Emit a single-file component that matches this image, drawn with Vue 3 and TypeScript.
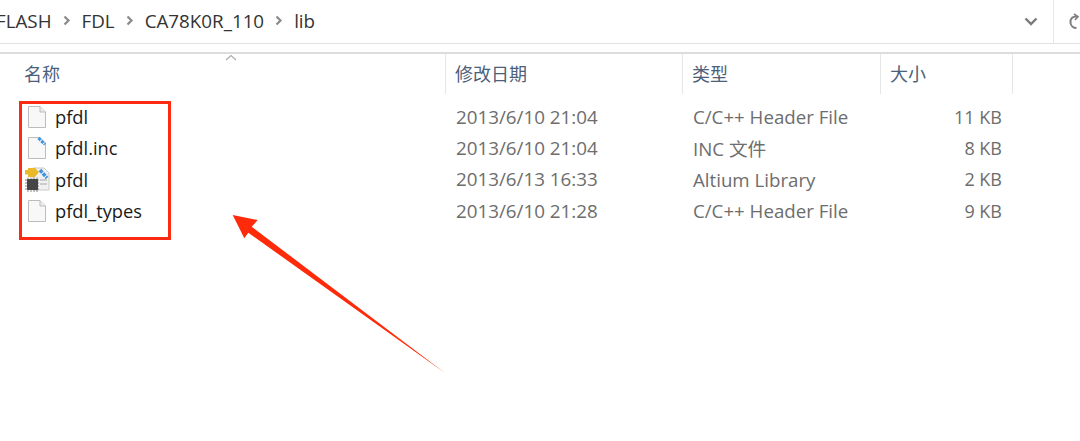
<template>
  <div class="explorer">
    <div class="address-bar">
      <nav class="crumbs">
        <template v-for="(part, i) in crumbs" :key="part">
          <span class="crumb">{{ part }}</span>
          <svg v-if="i < crumbs.length - 1" class="sep" width="8" height="11" viewBox="0 0 8 11">
            <path d="M1.500 1.500 5.500 5.500 1.500 9.500" fill="none" stroke="#8a8a8a" stroke-width="2.200" />
          </svg>
        </template>
      </nav>
      <div class="bar-tools">
        <svg class="dropdown" width="14" height="9" viewBox="0 0 14 9">
          <path d="M1.500 1.500 7 7 12.500 1.500" fill="none" stroke="#7a7a7a" stroke-width="2.400" />
        </svg>
        <div class="refresh">
          <svg width="12" height="18" viewBox="0 0 12 18">
            <path d="M9 3.500C4.500 3 2 6 2.500 10c.4 3 3 5 6 5" fill="none" stroke="#7f7f7f" stroke-width="2" />
            <path d="M6 1 10 3.600 7 7" fill="none" stroke="#7f7f7f" stroke-width="1.600" />
          </svg>
        </div>
      </div>
    </div>

    <div class="list">
      <div class="head">
        <div v-for="col in columns" :key="col" class="head-cell">{{ col }}</div>
        <svg class="sort" width="12" height="7" viewBox="0 0 12 7">
          <path d="M1 6 6 1.500 11 6" fill="none" stroke="#a9a9a9" stroke-width="1.100" />
        </svg>
      </div>

      <div class="rows">
        <div v-for="file in files" :key="file.name + file.date" class="row">
          <div class="name">
            <span class="icon">
              <svg v-if="file.icon === 'plain'" width="18" height="22" viewBox="0 0 18 22">
                <path d="M.5.500H12L17.500 6V21.500H.5Z" fill="#f8f8f8" stroke="#bcbcbc" />
                <path d="M12 .5V6H17.500" fill="#ececec" stroke="#bcbcbc" />
              </svg>
              <svg v-else-if="file.icon === 'inc'" width="18" height="22" viewBox="0 0 18 22">
                <path d="M.5.500H12L17.500 6V21.500H.5Z" fill="#f8f8f8" stroke="#bcbcbc" />
                <path d="M10.500 1 17 7.500" stroke="#3f94de" stroke-width="3" stroke-dasharray="3 1" />
              </svg>
              <svg v-else class="lib-icon" width="25" height="25" viewBox="0 0 25 25">
                <path d="M8 1H19L24 6V23H8Z" fill="#f1f1f1" stroke="#c8c8c8" />
                <path d="M15 13H22M15 17H22" stroke="#cbcbcb" stroke-width="2" />
                <path d="M15 3 22 11" stroke="#3f94de" stroke-width="3.500" stroke-dasharray="3.500 1" />
                <path d="M0 3H3V1H10L14 5 10 10H3V7.500H0Z" fill="#eab92c" />
                <path d="M0 13H14M0 16H14M0 19H14M0 22H14M3 10.500V25M6 10.500V25M9 10.500V25M12 10.500V25" stroke="#777" stroke-width=".9" />
                <rect x="2" y="12" width="11" height="11" rx="1" fill="#464646" />
              </svg>
            </span>
            <span class="file-name">{{ file.name }}</span>
          </div>
          <div class="cell date">{{ file.date }}</div>
          <div class="cell type">{{ file.type }}</div>
          <div class="cell size">{{ file.size }}</div>
        </div>
      </div>
    </div>

    <div class="highlight"></div>
    <svg class="arrow" width="1080" height="441" viewBox="0 0 1080 441">
      <path d="M445 373 248.300 232.700 244.300 238.300 232.700 215 257.700 220 251.700 226.700Z" fill="#ff2a0a" />
    </svg>
  </div>
</template>

<script setup lang="ts">
interface FileRow {
  name: string
  date: string
  type: string
  size: string
  icon: 'plain' | 'inc' | 'lib'
}

const crumbs = ['FLASH', 'FDL', 'CA78K0R_110', 'lib']
const columns = ['名称', '修改日期', '类型', '大小']

const files: FileRow[] = [
  { name: 'pfdl', date: '2013/6/10 21:04', type: 'C/C++ Header File', size: '11 KB', icon: 'plain' },
  { name: 'pfdl.inc', date: '2013/6/10 21:04', type: 'INC 文件', size: '8 KB', icon: 'inc' },
  { name: 'pfdl', date: '2013/6/13 16:33', type: 'Altium Library', size: '2 KB', icon: 'lib' },
  { name: 'pfdl_types', date: '2013/6/10 21:28', type: 'C/C++ Header File', size: '9 KB', icon: 'plain' }
]
</script>

<style>
html,
body {
  margin: 0;
  background: #fff;
}
</style>

<style scoped>
.explorer {
  position: relative;
  width: 1080px;
  height: 441px;
  overflow: hidden;
  background: #fff;
  font-family: "Open Sans", "Noto Sans CJK SC", sans-serif;
  font-size: 18px;
}

.address-bar {
  display: flex;
  justify-content: space-between;
  height: 43px;
  border-bottom: 1px solid #e2e2e2;
}

.crumbs {
  display: flex;
  align-items: center;
  gap: 11px;
  height: 41px;
  margin-left: -4px;
  color: #333;
  font-size: 18.8px;
}

.bar-tools {
  display: flex;
  align-items: center;
}

.dropdown {
  margin-right: 15px;
}

.refresh {
  display: flex;
  align-items: center;
  height: 43px;
  padding-left: 14px;
  border-left: 1px solid #e8e8e8;
}

.list {
  margin-top: 8px;
  border-top: 2px solid #dcdcdc;
}

.head {
  position: relative;
  display: grid;
  grid-template-columns: 446px 237px 198px 132px;
  height: 40px;
}

.head-cell {
  display: flex;
  align-items: center;
  box-sizing: border-box;
  padding-left: 9px;
  padding-bottom: 3px;
  color: #4c607a;
  border-right: 1px solid #e6e6e6;
}

.head-cell:first-child {
  padding-left: 24px;
}

.sort {
  position: absolute;
  left: 225px;
  top: 0;
}

.rows {
  margin-top: 7px;
}

.row {
  display: grid;
  grid-template-columns: 446px 237px 198px 132px;
  align-items: center;
  height: 31.3px;
}

.name {
  display: flex;
  align-items: center;
  padding-left: 26px;
}

.icon {
  display: flex;
  justify-content: center;
  width: 22px;
  margin-right: 7px;
}

.lib-icon {
  flex: none;
}

.file-name {
  color: #1a1a1a;
  font-size: 18.3px;
}

.cell {
  padding-left: 10px;
  color: #6d6d6d;
}

.date {
  font-size: 18.8px;
}

.type {
  font-size: 18.7px;
}

.size {
  padding-left: 0;
  padding-right: 11px;
  text-align: right;
}

.highlight {
  position: absolute;
  left: 19px;
  top: 101px;
  width: 146px;
  height: 133px;
  border: 3px solid #fc2a10;
}

.arrow {
  position: absolute;
  left: 0;
  top: 0;
  pointer-events: none;
}
</style>
